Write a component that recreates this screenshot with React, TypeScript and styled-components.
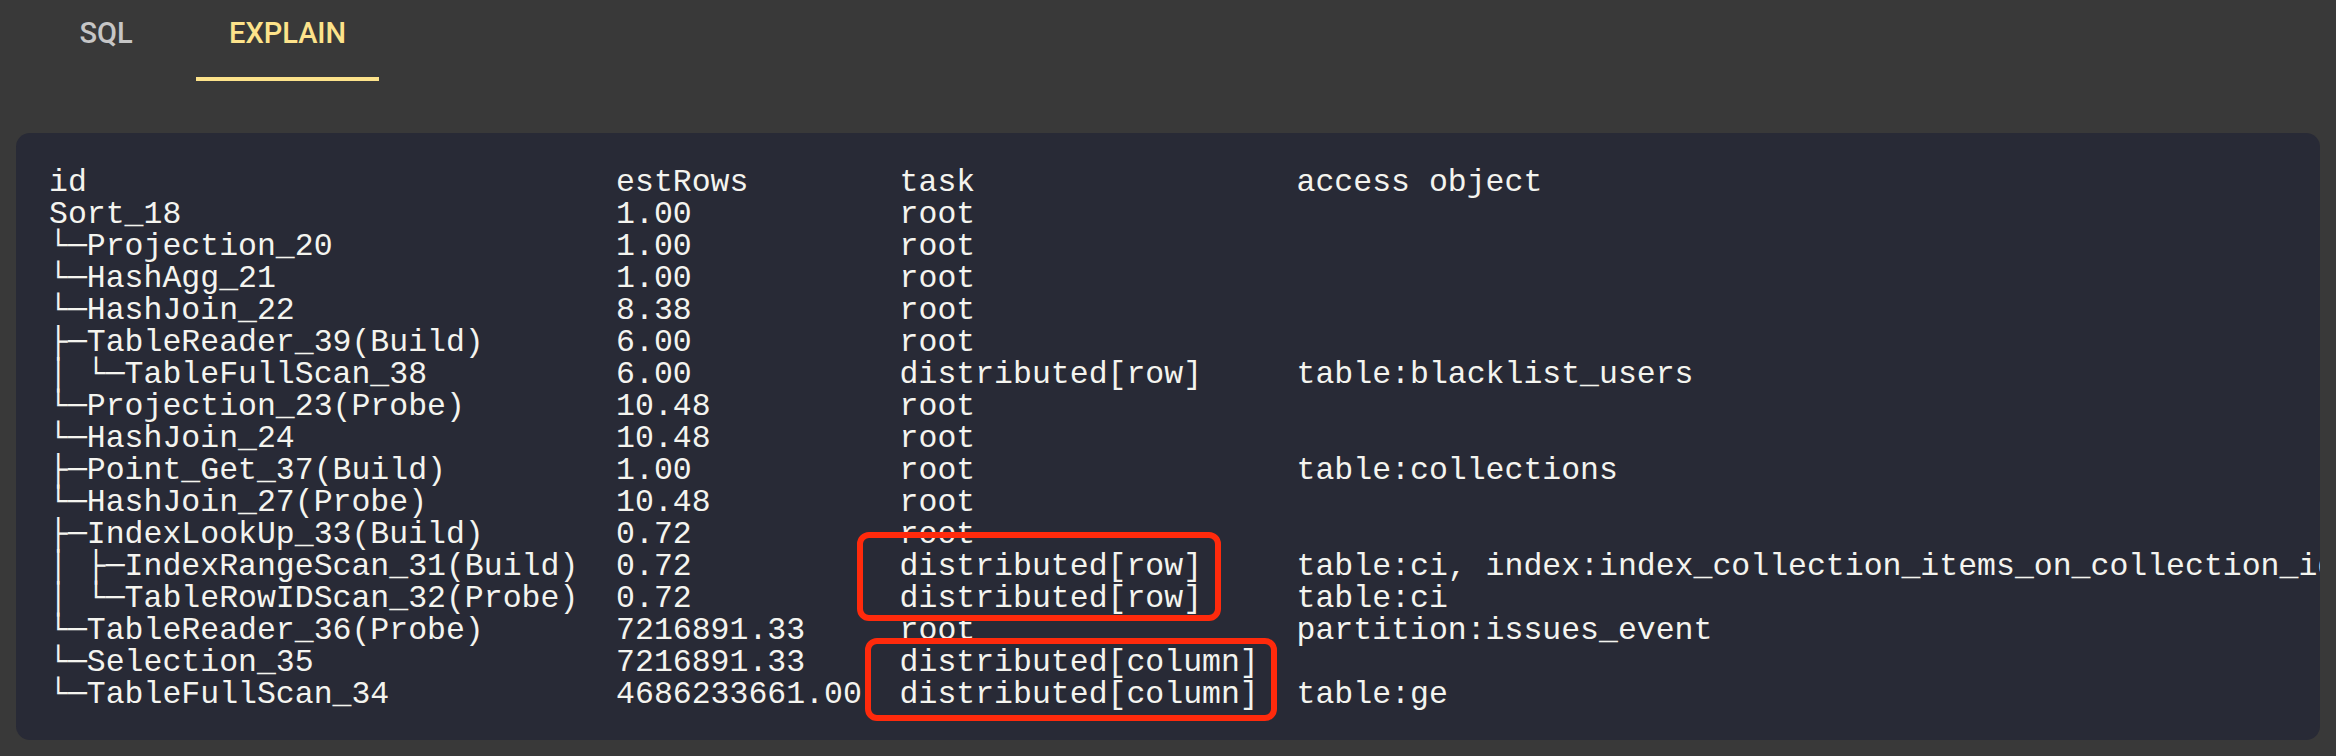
import React from "react";
import styled, { createGlobalStyle } from "styled-components";

const GlobalStyle = createGlobalStyle`
  html, body {
    margin: 0;
    padding: 0;
    background: #393939;
  }
  body {
    font-family: Roboto, "Noto Sans", sans-serif;
  }
`;

const Page = styled.div`
  display: flex;
  flex-direction: column;
  gap: 52px;
  padding: 0 16px 16px;
  width: 2336px;
  height: 756px;
  box-sizing: border-box;
`;

const TabBar = styled.div`
  display: flex;
  height: 81px;
`;

const Tab = styled.div<{ $active?: boolean }>`
  box-sizing: border-box;
  min-width: 180px;
  height: 81px;
  padding: 16px 33px 0;
  display: flex;
  justify-content: center;
  align-items: flex-start;
  font-family: Roboto, "Noto Sans", sans-serif;
  font-size: 29px;
  font-weight: 500;
  line-height: 34px;
  text-transform: uppercase;
  color: ${(p) => (p.$active ? "#fde38b" : "#c6c6c6")};
  border-bottom: 4px solid ${(p) => (p.$active ? "#fde38b" : "transparent")};
`;

const Panel = styled.div`
  position: relative;
  flex: 1;
  box-sizing: border-box;
  background: #282a36;
  border-radius: 14px;
  padding: 34px 0 29px 33px;
  overflow: hidden;
`;

const Plan = styled.div`
  display: flex;
  flex-direction: column;
  font-family: "Courier New", "Liberation Mono", monospace;
  font-size: 31.5px;
  line-height: 32px;
  color: #f4f4ef;
`;

const PlanRow = styled.div`
  display: grid;
  grid-template-columns: 30ch 15ch 21ch max-content;
  white-space: pre;
`;

const Cell = styled.span`
  white-space: pre;
`;

const Highlight = styled.div<{ $left: number; $top: number; $w: number; $h: number }>`
  position: absolute;
  left: ${(p) => p.$left}px;
  top: ${(p) => p.$top}px;
  width: ${(p) => p.$w}px;
  height: ${(p) => p.$h}px;
  box-sizing: border-box;
  border: 6px solid #ff2a0c;
  border-radius: 12px;
  pointer-events: none;
`;

type Row = [string, string, string, string];

const rows: Row[] = [
  ["id", "estRows", "task", "access object"],
  ["Sort_18", "1.00", "root", ""],
  ["└─Projection_20", "1.00", "root", ""],
  ["└─HashAgg_21", "1.00", "root", ""],
  ["└─HashJoin_22", "8.38", "root", ""],
  ["├─TableReader_39(Build)", "6.00", "root", ""],
  ["│ └─TableFullScan_38", "6.00", "distributed[row]", "table:blacklist_users"],
  ["└─Projection_23(Probe)", "10.48", "root", ""],
  ["└─HashJoin_24", "10.48", "root", ""],
  ["├─Point_Get_37(Build)", "1.00", "root", "table:collections"],
  ["└─HashJoin_27(Probe)", "10.48", "root", ""],
  ["├─IndexLookUp_33(Build)", "0.72", "root", ""],
  [
    "│ ├─IndexRangeScan_31(Build)",
    "0.72",
    "distributed[row]",
    "table:ci, index:index_collection_items_on_collection_id(collection_id)",
  ],
  ["│ └─TableRowIDScan_32(Probe)", "0.72", "distributed[row]", "table:ci"],
  ["└─TableReader_36(Probe)", "7216891.33", "root", "partition:issues_event"],
  ["└─Selection_35", "7216891.33", "distributed[column]", ""],
  ["└─TableFullScan_34", "4686233661.00", "distributed[column]", "table:ge"],
];

export default function App() {
  return (
    <>
      <GlobalStyle />
      <Page>
        <TabBar>
          <Tab>SQL</Tab>
          <Tab $active>EXPLAIN</Tab>
        </TabBar>
        <Panel>
          <Plan>
            {rows.map((r, i) => (
              <PlanRow key={i}>
                {r.map((c, j) => (
                  <Cell key={j}>{c}</Cell>
                ))}
              </PlanRow>
            ))}
          </Plan>
          <Highlight $left={841} $top={399} $w={364} $h={89} />
          <Highlight $left={849} $top={505} $w={412} $h={83} />
        </Panel>
      </Page>
    </>
  );
}
